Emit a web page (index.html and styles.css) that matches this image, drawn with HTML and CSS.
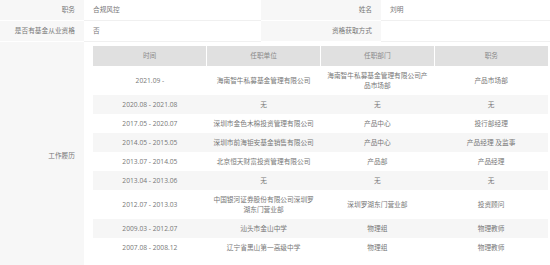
FILE: index.html
```html
<!DOCTYPE html>
<html lang="zh-CN">
<head>
<meta charset="utf-8">
<title>人员信息</title>
<link rel="stylesheet" href="styles.css">
</head>
<body>
<div class="info">
  <div class="label">职务</div>
  <div class="value">合规风控</div>
  <div class="label">姓名</div>
  <div class="value">刘明</div>

  <div class="label">是否有基金从业资格</div>
  <div class="value">否</div>
  <div class="label">资格获取方式</div>
  <div class="value"></div>

  <div class="label label-tall">工作履历</div>
  <div class="value value-wide">
    <table class="resume">
      <thead>
        <tr><th>时间</th><th>任职单位</th><th>任职部门</th><th>职务</th></tr>
      </thead>
      <tbody>
        <tr><td>2021.09 -</td><td>海南智牛私募基金管理有限公司</td><td>海南智牛私募基金管理有限公司产品市场部</td><td>产品市场部</td></tr>
        <tr><td>2020.08 - 2021.08</td><td>无</td><td>无</td><td>无</td></tr>
        <tr><td>2017.05 - 2020.07</td><td>深圳市金色木棉投资管理有限公司</td><td>产品中心</td><td>投行部经理</td></tr>
        <tr><td>2014.05 - 2015.05</td><td>深圳市前海钜安基金销售有限公司</td><td>产品中心</td><td>产品经理 及监事</td></tr>
        <tr><td>2013.07 - 2014.05</td><td>北京恒天财富投资管理有限公司</td><td>产品部</td><td>产品经理</td></tr>
        <tr><td>2013.04 - 2013.06</td><td>无</td><td>无</td><td>无</td></tr>
        <tr><td>2012.07 - 2013.03</td><td>中国银河证券股份有限公司深圳罗湖东门营业部</td><td>深圳罗湖东门营业部</td><td>投资顾问</td></tr>
        <tr><td>2009.03 - 2012.07</td><td>汕头市金山中学</td><td>物理组</td><td>物理教师</td></tr>
        <tr><td>2007.08 - 2008.12</td><td>辽宁省黑山第一高级中学</td><td>物理组</td><td>物理教师</td></tr>
      </tbody>
    </table>
  </div>
</div>
</body>
</html>
```
FILE: styles.css
```css
html, body {
  margin: 0;
  padding: 0;
  background: #fff;
}

body {
  font-family: "Open Sans", "Noto Sans CJK SC", sans-serif;
  font-size: 6.7px;
  color: #777;
}

.info {
  display: grid;
  grid-template-columns: 84px 177px 120px 169px;
  grid-auto-rows: 21px;
}

.label,
.value {
  display: flex;
  align-items: center;
  border-bottom: 1px solid #f0f0f0;
  line-height: 10px;
}

.label {
  justify-content: flex-end;
  padding-right: 9px;
  background: #f7f7f7;
  border-bottom-color: #fff;
}

.value {
  padding-left: 9px;
  background: #fff;
}

.label-tall {
  grid-row: span 11;
  padding-bottom: 2px;
}

.value-wide {
  grid-column: 2 / span 3;
  grid-row: span 11;
  align-items: flex-start;
  padding-top: 4px;
  padding-left: 9px;
  border-bottom: none;
}

.resume {
  width: 455px;
  border-collapse: collapse;
  table-layout: fixed;
}

.resume th,
.resume td {
  text-align: center;
  line-height: 10px;
  padding: 4.5px 5px;
  font-weight: normal;
}

.resume th {
  background: #e0e0e0;
  color: #8a8a8a;
  padding: 5px 5px;
  border-left: 1px solid #fff;
}

.resume th:first-child {
  border-left: none;
}

.resume tbody tr:nth-child(even) td {
  background: #f6f6f6;
}
```
